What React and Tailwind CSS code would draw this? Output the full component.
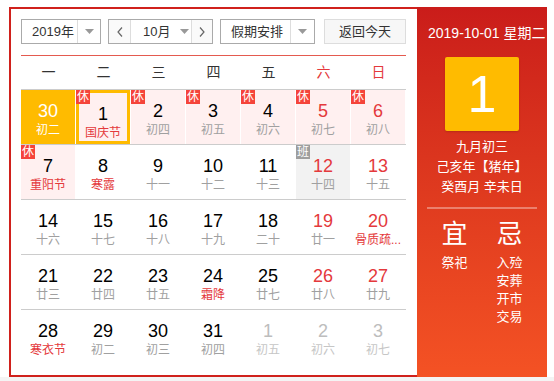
import React from "react";

const F = { fontFamily: '"Liberation Sans","Noto Sans CJK SC",sans-serif' };

const rows = [
  [
    { n: 30, l: "初二", today: true },
    { n: 1, l: "国庆节", badge: "休", bg: "hol", sel: true, lr: true },
    { n: 2, l: "初四", badge: "休", bg: "hol" },
    { n: 3, l: "初五", badge: "休", bg: "hol" },
    { n: 4, l: "初六", badge: "休", bg: "hol" },
    { n: 5, l: "初七", badge: "休", bg: "hol", nr: true },
    { n: 6, l: "初八", badge: "休", bg: "hol", nr: true },
  ],
  [
    { n: 7, l: "重阳节", badge: "休", bg: "hol", lr: true },
    { n: 8, l: "寒露", lr: true },
    { n: 9, l: "十一" },
    { n: 10, l: "十二" },
    { n: 11, l: "十三" },
    { n: 12, l: "十四", badge: "班", bg: "work", nr: true },
    { n: 13, l: "十五", nr: true },
  ],
  [
    { n: 14, l: "十六" },
    { n: 15, l: "十七" },
    { n: 16, l: "十八" },
    { n: 17, l: "十九" },
    { n: 18, l: "二十" },
    { n: 19, l: "廿一", nr: true },
    { n: 20, l: "骨质疏...", nr: true, lr: true },
  ],
  [
    { n: 21, l: "廿三" },
    { n: 22, l: "廿四" },
    { n: 23, l: "廿五" },
    { n: 24, l: "霜降", lr: true },
    { n: 25, l: "廿七" },
    { n: 26, l: "廿八", nr: true },
    { n: 27, l: "廿九", nr: true },
  ],
  [
    { n: 28, l: "寒衣节", lr: true },
    { n: 29, l: "初二" },
    { n: 30, l: "初三" },
    { n: 31, l: "初四" },
    { n: 1, l: "初五", other: true },
    { n: 2, l: "初六", other: true },
    { n: 3, l: "初七", other: true },
  ],
];

function Caret() {
  return (
    <svg width="9" height="5" viewBox="0 0 9 5">
      <path d="M0 0 L9 0 L4.5 5 Z" fill="#999" />
    </svg>
  );
}

function Cell({ c }) {
  let bg = "";
  if (c.today) bg = "bg-[#ffbb00]";
  else if (c.bg === "hol") bg = "bg-[#fff0f0]";
  else if (c.bg === "work") bg = "bg-[#f2f2f2]";
  let numColor = "text-black";
  if (c.today) numColor = "text-white";
  else if (c.other) numColor = "text-[#bdbdbd]";
  else if (c.nr) numColor = "text-[#e4393c]";
  let lunColor = "text-[#a0a0a0]";
  if (c.today) lunColor = "text-white";
  else if (c.other) lunColor = "text-[#c6c6c6]";
  else if (c.lr) lunColor = "text-[#e4393c]";
  return (
    <div className="w-[55px] h-[54px] border-r border-white box-border">
      <div
        className={`relative w-full h-full flex flex-col items-center pt-[10px] box-border ${bg} ${
          c.sel ? "border-[3px] border-[#ffbb00] pt-[7px]" : ""
        }`}
      >
        {c.badge && (
          <div
            className={`absolute ${c.sel ? "-left-[3px] -top-[3px]" : "left-0 top-0"} w-[14px] h-[14px] text-[12px] leading-[14px] text-center text-white ${
              c.badge === "休" ? "bg-[#f5443a]" : "bg-[#9e9e9e]"
            }`}
          >
            {c.badge}
          </div>
        )}
        <div className={`text-[18px] leading-[22px] ${numColor}`}>{c.n}</div>
        <div className={`text-[12px] leading-[16px] whitespace-nowrap ${lunColor}`}>{c.l}</div>
      </div>
    </div>
  );
}

export default function App() {
  const week = ["一", "二", "三", "四", "五", "六", "日"];
  return (
    <div className="w-[554px] h-[381px] bg-white overflow-hidden flex flex-col" style={F}>
      <div className="pt-[7px] pl-[9px] flex">
        <div className="w-[408px] h-[370px] border-2 border-r-0 border-[#d0211c] pl-[10px] pr-[11px] pt-[10px] box-border flex flex-col">
          {/* toolbar */}
          <div className="flex h-[25px] text-[13px] text-[#333]">
            <div className="w-[80px] h-[25px] border border-[#aaa] flex box-border">
              <div className="w-[55px] flex items-center pl-[10px]">2019年</div>
              <div className="flex-1 border-l border-[#ddd] flex items-center justify-center">
                <Caret />
              </div>
            </div>
            <div className="ml-[7px] w-[105px] h-[25px] border border-[#aaa] flex box-border">
              <div className="w-[22px] bg-[#fafafa] flex items-center justify-center border-r border-[#ddd]">
                <svg width="6" height="10" viewBox="0 0 6 10">
                  <path d="M5 0.5 L1 5 L5 9.5" fill="none" stroke="#666" strokeWidth="1.2" />
                </svg>
              </div>
              <div className="w-[60px] flex items-center pl-[12px]">
                <span>10月</span>
                <span className="ml-[10px] flex">
                  <Caret />
                </span>
              </div>
              <div className="flex-1 bg-[#fafafa] flex items-center justify-center border-l border-[#ddd]">
                <svg width="6" height="10" viewBox="0 0 6 10">
                  <path d="M1 0.5 L5 5 L1 9.5" fill="none" stroke="#666" strokeWidth="1.2" />
                </svg>
              </div>
            </div>
            <div className="ml-[7px] w-[95px] h-[25px] border border-[#aaa] flex box-border">
              <div className="w-[69px] flex items-center pl-[10px]">假期安排</div>
              <div className="flex-1 border-l border-[#ddd] flex items-center justify-center">
                <Caret />
              </div>
            </div>
            <div className="ml-[9px] w-[82px] h-[25px] border border-[#ddd] bg-[#f7f7f7] flex items-center justify-center box-border">
              返回今天
            </div>
          </div>
          <div className="mt-[11px] h-px bg-[#e45a4f]" />
          {/* week header */}
          <div className="flex h-[34px] border-b border-[#ccc] box-border">
            {week.map((w, i) => (
              <div
                key={w}
                className={`w-[55px] flex items-center justify-center text-[14px] ${
                  i >= 5 ? "text-[#e4393c]" : "text-[#333]"
                }`}
              >
                {w}
              </div>
            ))}
          </div>
          {rows.map((r, ri) => (
            <div
              key={ri}
              className={`flex ${ri < 4 ? "h-[55px] border-b border-[#ccc]" : "h-[54px]"} box-border`}
            >
              {r.map((c, ci) => (
                <Cell key={ci} c={c} />
              ))}
            </div>
          ))}
        </div>
        <div className="w-[130px] h-[370px] bg-linear-to-b from-[#ca1c1a] to-[#f45224] flex flex-col items-center text-white">
          <div className="mt-[16px] self-start pl-[11px] text-[14px] leading-[20px] whitespace-nowrap">2019-10-01 星期二</div>
          <div className="mt-[14px] w-[74px] h-[74px] bg-[#ffbb00] rounded-[2px] flex items-center justify-center text-[52px] leading-none shadow-[0_1px_2px_rgba(0,0,0,0.15)]">
            1
          </div>
          <div className="mt-[6px] text-[13px] leading-[20px]">九月初三</div>
          <div className="text-[13px] leading-[20px] whitespace-nowrap">己亥年【猪年】</div>
          <div className="text-[13px] leading-[20px] whitespace-nowrap">癸酉月 辛未日</div>
          <div className="mt-[10px] w-[110px] h-[2px] bg-white/35" />
          <div className="flex w-[110px]">
            <div className="w-[55px] flex flex-col items-center">
              <div className="mt-[10px] text-[26px] leading-[30px]">宜</div>
              <div className="mt-[5px] text-[13px] leading-[18px]">祭祀</div>
            </div>
            <div className="w-[55px] flex flex-col items-center">
              <div className="mt-[10px] text-[26px] leading-[30px]">忌</div>
              <div className="mt-[5px] text-[13px] leading-[18px]">入殓</div>
              <div className="text-[13px] leading-[18px]">安葬</div>
              <div className="text-[13px] leading-[18px]">开市</div>
              <div className="text-[13px] leading-[18px]">交易</div>
            </div>
          </div>
        </div>
      </div>
      <div className="flex-1 bg-[#f4f4f4]" />
    </div>
  );
}
